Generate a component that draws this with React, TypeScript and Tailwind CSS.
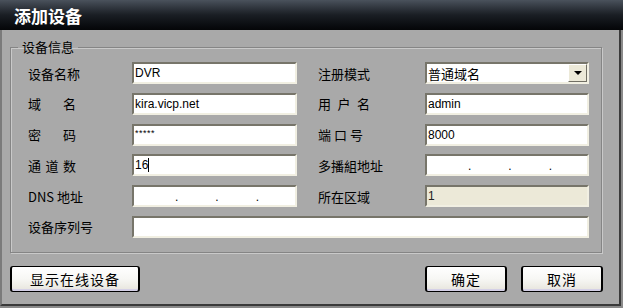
import type { ReactNode } from 'react';

const inputBox =
  'h-[22px] border-2 border-t-[#77756a] border-l-[#77756a] border-r-[#f1efe2] border-b-[#f1efe2] flex items-center pl-[1px] text-[12px] text-black font-["Liberation_Sans",sans-serif]';

function Label({ children }: { children: ReactNode }) {
  return <div className="h-[22px] flex items-center text-[13px] leading-none text-black">{children}</div>;
}

function Spread({ chars, width }: { chars: string[]; width: string }) {
  return (
    <div className={`h-[22px] flex items-center`}>
      <div className={`flex justify-between text-[13px] leading-none text-black ${width}`}>
        {chars.map((c) => (
          <span key={c}>{c}</span>
        ))}
      </div>
    </div>
  );
}

function TextField({ children, disabled }: { children?: ReactNode; disabled?: boolean }) {
  return <div className={`${inputBox} ${disabled ? 'bg-[#ece9d8]' : 'bg-white'}`}>{children}</div>;
}

function IpField() {
  return (
    <div className={`${inputBox} bg-white`}>
      <div className="flex gap-[37px] pl-[40px] pt-[2px]">
        <span>.</span>
        <span>.</span>
        <span>.</span>
      </div>
    </div>
  );
}

function Button({ label, width }: { label: string; width: string }) {
  return (
    <button
      className={`h-[26px] ${width} rounded-[3px] border border-black border-l-2 border-r-2 bg-linear-to-b from-white via-[#f7f7f4] to-[#e6e4dc] shadow-[inset_0_-2px_0_#d4d0e6] text-[14px] tracking-[1px] leading-none text-black`}
    >
      {label}
    </button>
  );
}

export default function App() {
  return (
    <div className="w-[623px] h-[308px] bg-[#8a8a8a] flex flex-col font-['Noto_Sans_CJK_SC',sans-serif]">
      <div className="h-[30px] shrink-0 bg-linear-to-b from-[#4a525c] via-[#1a1e24] to-[#050608] flex items-center pl-[14px]">
        <span className="text-white text-[17px] font-bold leading-none">添加设备</span>
      </div>

      <div className="flex-1 mr-[2px] mb-[2px] bg-[#a9a9a9] border-l-2 border-l-[#7b7b7b] border-r-2 border-r-[#3a3a3a] border-b-2 border-b-[#3a3a3a] flex flex-col">
        <fieldset className="ml-[8px] mt-[9px] w-[592px] border border-[#858585] shadow-[inset_1px_1px_0_#c9c9c9,1px_1px_0_#c9c9c9] px-[7px] pt-[7px] pb-[14px]">
          <legend className="px-[4px] text-[13px] leading-[16px] text-black">设备信息</legend>

          <div className="ml-[10px] grid grid-cols-[104px_165px_21px_107px_164px] gap-y-[8.8px]">
            <Label>设备名称</Label>
            <TextField>DVR</TextField>
            <div />
            <Label>注册模式</Label>
            <div className={`${inputBox} bg-white justify-between`}>
              <span className="text-[13px] font-['Noto_Sans_CJK_SC',sans-serif] leading-none">普通域名</span>
              <div className="w-[19px] h-full bg-[#ece9d8] border border-t-white border-l-white border-r-[#716f64] border-b-[#716f64] flex items-center justify-center">
                <div className="w-0 h-0 border-l-[4px] border-r-[4px] border-t-[4px] border-l-transparent border-r-transparent border-t-black" />
              </div>
            </div>

            <Spread chars={['域', '名']} width="w-[48px]" />
            <TextField>kira.vicp.net</TextField>
            <div />
            <Spread chars={['用', '户', '名']} width="w-[52px]" />
            <TextField>admin</TextField>

            <Spread chars={['密', '码']} width="w-[48px]" />
            <div className={`${inputBox} bg-white !items-start pt-[3px]`}>
              <span className="text-[9px] tracking-[0.5px] leading-none">*****</span>
            </div>
            <div />
            <Spread chars={['端', '口', '号']} width="w-[45px]" />
            <TextField>8000</TextField>

            <Spread chars={['通', '道', '数']} width="w-[48px]" />
            <TextField>
              <span>16</span>
              <span className="w-[1px] h-[14px] bg-black" />
            </TextField>
            <div />
            <Label>多播組地址</Label>
            <IpField />

            <Label>DNS 地址</Label>
            <IpField />
            <div />
            <Label>所在区域</Label>
            <TextField disabled>
              <span className="text-[#222]">1</span>
            </TextField>

            <Label>设备序列号</Label>
            <div className="col-span-4">
              <TextField />
            </div>
          </div>
        </fieldset>

        <div className="mt-[13px] ml-[8px] mr-[16px] flex justify-between">
          <Button label="显示在线设备" width="w-[130px]" />
          <div className="flex gap-[14px]">
            <Button label="确定" width="w-[82px]" />
            <Button label="取消" width="w-[82px]" />
          </div>
        </div>
      </div>
    </div>
  );
}
